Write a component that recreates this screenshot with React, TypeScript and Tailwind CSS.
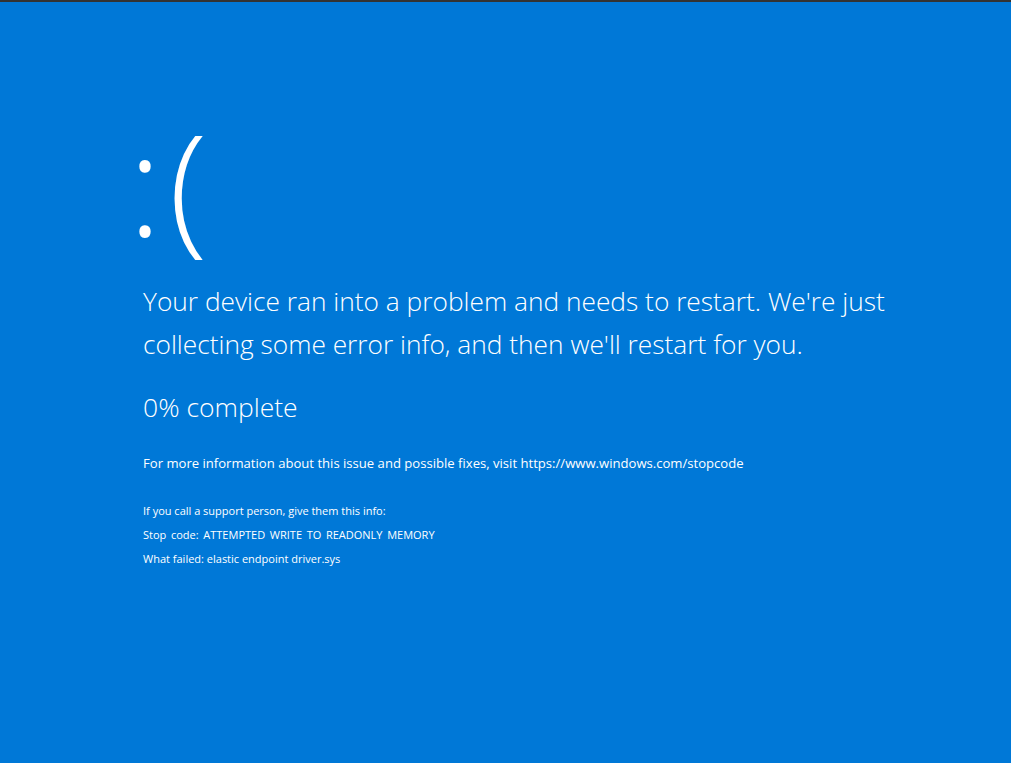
export default function App() {
  return (
    <div className="h-[763px] w-[1011px] overflow-hidden bg-[#0078d7] border-t-2 border-[#333333] font-['Open_Sans',sans-serif] font-light text-white">
      <div className="flex flex-col pl-[143px] pt-[105px]">
        <div className="-ml-[15px] text-[142px] leading-[150px] font-[350] tracking-[7px]">:(</div>
        <p className="mt-[23px] text-[26.3px] leading-[43px] max-w-[780px]">
          Your device ran into a problem and needs to restart. We're just
          collecting some error info, and then we'll restart for you.
        </p>
        <p className="mt-[24px] text-[26.5px] leading-[34px]">0% complete</p>
        <p className="mt-[30px] text-[13.1px] leading-[18px] font-normal">
          For more information about this issue and possible fixes, visit
          https://www.windows.com/stopcode
        </p>
        <div className="mt-[31px] flex flex-col gap-[8px] text-[11px] leading-[16px] font-normal">
          <p>If you call a support person, give them this info:</p>
          <p className="[word-spacing:1.8px]">
            Stop code: ATTEMPTED WRITE TO READONLY MEMORY
          </p>
          <p>What failed: elastic endpoint driver.sys</p>
        </div>
      </div>
    </div>
  );
}
